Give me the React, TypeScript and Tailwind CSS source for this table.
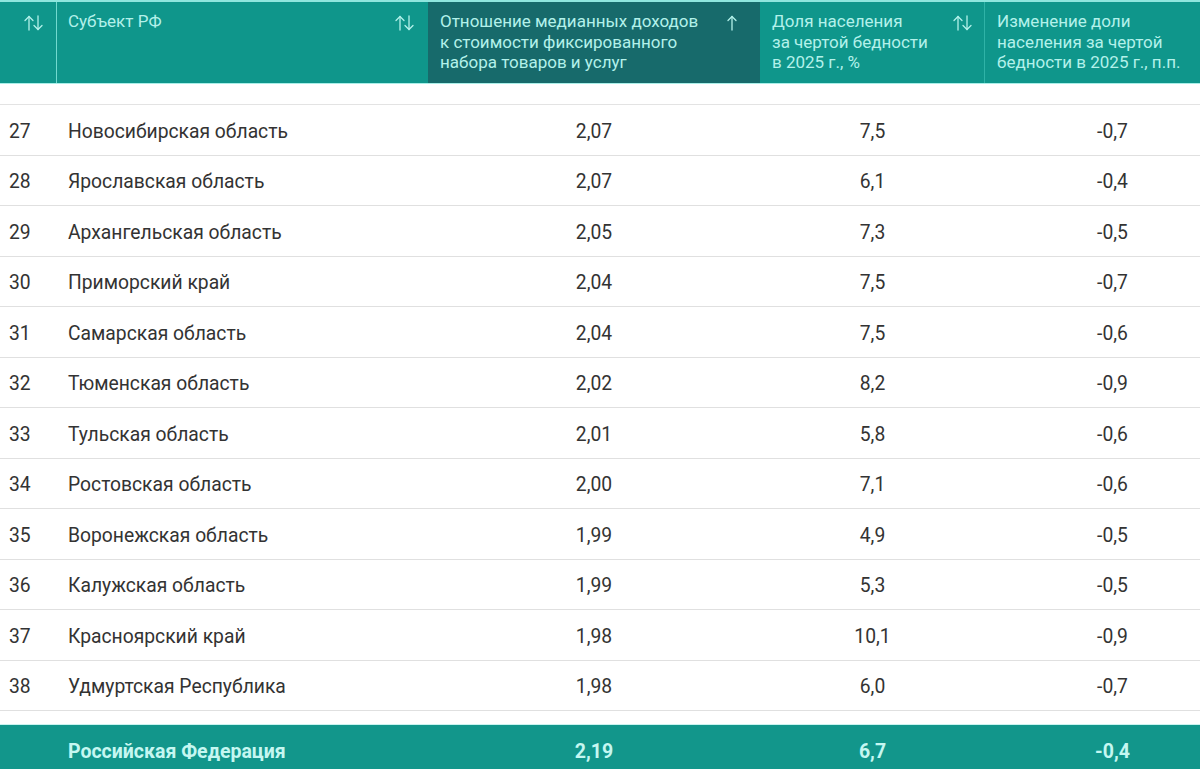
const rows: [string, string, string, string, string][] = [
  ['27', 'Новосибирская область', '2,07', '7,5', '-0,7'],
  ['28', 'Ярославская область', '2,07', '6,1', '-0,4'],
  ['29', 'Архангельская область', '2,05', '7,3', '-0,5'],
  ['30', 'Приморский край', '2,04', '7,5', '-0,7'],
  ['31', 'Самарская область', '2,04', '7,5', '-0,6'],
  ['32', 'Тюменская область', '2,02', '8,2', '-0,9'],
  ['33', 'Тульская область', '2,01', '5,8', '-0,6'],
  ['34', 'Ростовская область', '2,00', '7,1', '-0,6'],
  ['35', 'Воронежская область', '1,99', '4,9', '-0,5'],
  ['36', 'Калужская область', '1,99', '5,3', '-0,5'],
  ['37', 'Красноярский край', '1,98', '10,1', '-0,9'],
  ['38', 'Удмуртская Республика', '1,98', '6,0', '-0,7'],
];

const SortIcon = ({ up = true, down = true }: { up?: boolean; down?: boolean }) => (
  <svg width="19" height="16" viewBox="0 0 19 16" fill="none" stroke="currentColor" strokeWidth="1.3" strokeLinecap="round" strokeLinejoin="round">
    {up && (
      <>
        <path d="M5 15V1.5" />
        <path d="M1 5.5L5 1.5L9 5.5" />
      </>
    )}
    {down && (
      <>
        <path d="M14 1V14.5" />
        <path d="M10 10.5L14 14.5L18 10.5" />
      </>
    )}
  </svg>
);

const App = () => {
  return (
    <div
      className="w-[1200px] h-[769px] overflow-hidden bg-white"
      style={{ fontFamily: 'Roboto, "Liberation Sans", sans-serif' }}
    >
      <div className="w-[1240px]">
        {/* header */}
        <div className="flex h-[84px] border-t-2 border-b border-t-[#8fe6de] border-b-[#a9efe8] bg-[#0f968b] text-[17px] leading-[20.5px] text-[#b3f1ea]">
          <div className="w-[57px] shrink-0 border-r border-[#72d9cf] flex justify-end pr-[13px] pt-[13px]">
            <SortIcon />
          </div>
          <div className="w-[371px] shrink-0 flex justify-between pl-[11px] pr-[14px] pt-[9px]">
            <span>Субъект РФ</span>
            <span className="pt-[4px]">
              <SortIcon />
            </span>
          </div>
          <div className="w-[332px] shrink-0 bg-[#176a6b] flex justify-between pl-[12px] pr-[14px] pt-[9px]">
            <span className="whitespace-nowrap">
              Отношение медианных доходов
              <br />к стоимости фиксированного
              <br />
              набора товаров и услуг
            </span>
            <span className="pt-[4px]">
              <SortIcon down={false} />
            </span>
          </div>
          <div className="w-[225px] shrink-0 border-r border-[#2fb3a7] flex justify-between pl-[12px] pr-[12px] pt-[9px]">
            <span className="whitespace-nowrap">
              Доля населения
              <br />
              за чертой бедности
              <br />в 2025 г., %
            </span>
            <span className="pt-[4px]">
              <SortIcon />
            </span>
          </div>
          <div className="w-[255px] shrink-0 pl-[12px] pt-[9px] whitespace-nowrap">
            Изменение доли
            <br />
            населения за чертой
            <br />
            бедности в 2025 г., п.п.
          </div>
        </div>

        {/* spacer row */}
        <div className="h-[21px] border-b border-[#e3e3e3]" />

        {/* rows */}
        {rows.map(([n, name, ratio, share, delta]) => (
          <div key={n} className="flex items-center pt-[5px] h-[50.5px] border-b border-[#e0e0e0] text-[19.3px] text-[#333333]">
            <div className="w-[57px] shrink-0 pl-[9px]">{n}</div>
            <div className="w-[371px] shrink-0 pl-[11px]">{name}</div>
            <div className="w-[332px] shrink-0 text-center">{ratio}</div>
            <div className="w-[225px] shrink-0 text-center">{share}</div>
            <div className="w-[255px] shrink-0 text-center">{delta}</div>
          </div>
        ))}

        {/* total */}
        <div className="mt-[13px] border-t border-[#c9f3ef]">
          <div className="flex items-center pt-[4px] h-[50px] bg-[#12968b] text-[19.5px] font-bold text-[#c5f7f1]">
            <div className="w-[57px] shrink-0" />
            <div className="w-[371px] shrink-0 pl-[11px]">Российская Федерация</div>
            <div className="w-[332px] shrink-0 text-center">2,19</div>
            <div className="w-[225px] shrink-0 text-center">6,7</div>
            <div className="w-[255px] shrink-0 text-center">-0,4</div>
          </div>
        </div>
      </div>
    </div>
  );
};

export default App;
